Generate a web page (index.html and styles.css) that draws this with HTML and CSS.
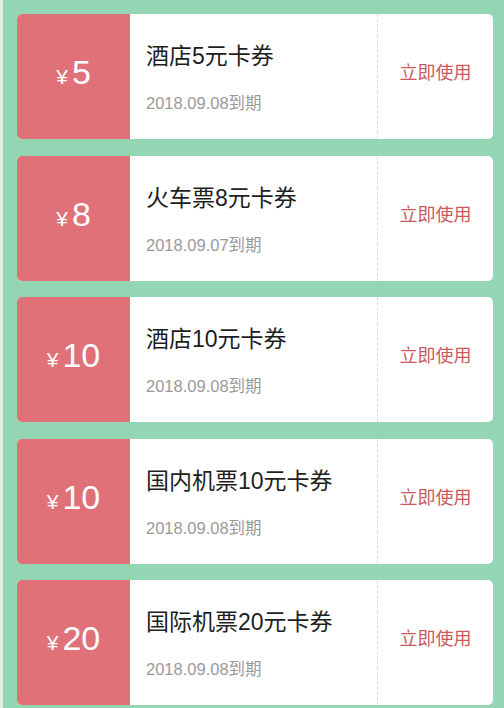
FILE: index.html
```html
<!DOCTYPE html>
<html lang="zh">
<head>
<meta charset="utf-8">
<title>卡券</title>
<link rel="stylesheet" href="styles.css">
</head>
<body>
<div class="page">
  <div class="list">
    <div class="card">
      <div class="price"><span class="yen">¥</span><span class="amount">5</span></div>
      <div class="info">
        <div class="title">酒店5元卡券</div>
        <div class="date">2018.09.08到期</div>
      </div>
      <div class="action">立即使用</div>
    </div>
    <div class="card">
      <div class="price"><span class="yen">¥</span><span class="amount">8</span></div>
      <div class="info">
        <div class="title">火车票8元卡券</div>
        <div class="date">2018.09.07到期</div>
      </div>
      <div class="action">立即使用</div>
    </div>
    <div class="card">
      <div class="price"><span class="yen">¥</span><span class="amount">10</span></div>
      <div class="info">
        <div class="title">酒店10元卡券</div>
        <div class="date">2018.09.08到期</div>
      </div>
      <div class="action">立即使用</div>
    </div>
    <div class="card">
      <div class="price"><span class="yen">¥</span><span class="amount">10</span></div>
      <div class="info">
        <div class="title">国内机票10元卡券</div>
        <div class="date">2018.09.08到期</div>
      </div>
      <div class="action">立即使用</div>
    </div>
    <div class="card">
      <div class="price"><span class="yen">¥</span><span class="amount">20</span></div>
      <div class="info">
        <div class="title">国际机票20元卡券</div>
        <div class="date">2018.09.08到期</div>
      </div>
      <div class="action">立即使用</div>
    </div>
  </div>
</div>
</body>
</html>
```
FILE: styles.css
```css
html, body {
  margin: 0;
  padding: 0;
  height: 100%;
}
body {
  background: #94d5b3;
  font-family: "Liberation Sans", "Noto Sans CJK SC", sans-serif;
  overflow: hidden;
}
.page {
  border-left: 3px solid #e6ebe8;
  height: 100%;
  box-sizing: border-box;
  padding: 14px 11px 0 14px;
}
.list {
  display: flex;
  flex-direction: column;
  gap: 16.5px;
}
.card {
  display: flex;
  height: 125px;
  background: #fff;
  border-radius: 5px;
  overflow: hidden;
}
.price {
  width: 113px;
  flex: none;
  background: #e07179;
  color: #fff;
  display: flex;
  align-items: baseline;
  justify-content: center;
  box-sizing: border-box;
  padding-top: 38px;
}
.yen {
  font-size: 21px;
  margin-right: 4px;
}
.amount {
  font-size: 34px;
  line-height: 40px;
}
.info {
  flex: 1;
  padding-left: 16px;
  padding-top: 27px;
}
.title {
  font-size: 23px;
  line-height: 30px;
  color: #1e1e1e;
}
.date {
  margin-top: 22px;
  font-size: 16.5px;
  line-height: 20px;
  color: #9a9a9a;
}
.action {
  width: 116px;
  flex: none;
  border-left: 1px dashed #dcdcdc;
  display: flex;
  align-items: center;
  justify-content: center;
  padding-bottom: 11px;
  box-sizing: border-box;
  font-size: 18px;
  color: #c95a5e;
}
```
